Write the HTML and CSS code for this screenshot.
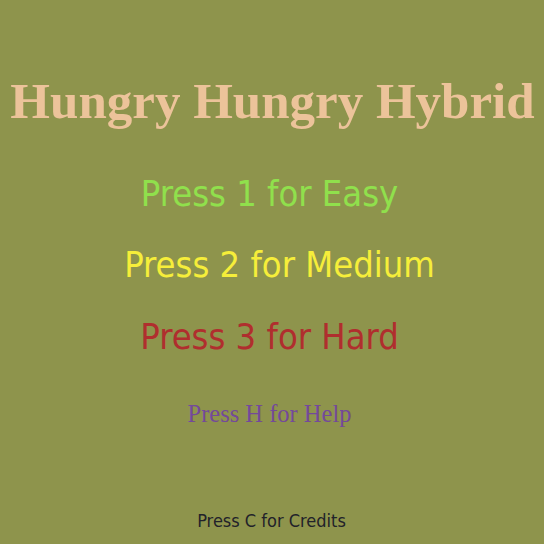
FILE: index.html
```html
<!DOCTYPE html>
<html>
<head>
<meta charset="utf-8">
<link rel="stylesheet" href="styles.css">
</head>
<body>
<main class="screen">
  <h1 class="title">Hungry Hungry Hybrid</h1>
  <p class="opt easy">Press 1 for Easy</p>
  <p class="opt medium">Press 2 for Medium</p>
  <p class="opt hard">Press 3 for Hard</p>
  <p class="help">Press H for Help</p>
  <p class="credits">Press C for Credits</p>
</main>
</body>
</html>
```
FILE: styles.css
```css
html, body {
  margin: 0;
  padding: 0;
}
body {
  width: 544px;
  height: 544px;
  background: #8e944c;
  overflow: hidden;
}
.screen {
  display: flex;
  flex-direction: column;
  align-items: center;
  height: 544px;
  padding-right: 5px;
}
.title {
  margin: 73px 0 0 0;
  padding-left: 6px;
  font-family: "Liberation Serif", serif;
  font-weight: bold;
  font-size: 51px;
  line-height: 56px;
  color: #ecc39a;
  white-space: nowrap;
}
.opt {
  margin: 0;
  font-family: "DejaVu Sans", sans-serif;
  font-stretch: semi-condensed;
  font-size: 36px;
  line-height: 40px;
  white-space: nowrap;
}
.easy {
  margin-top: 45px;
  color: #90e04c;
}
.medium {
  margin-top: 31px;
  color: #f6ee3a;
  padding-left: 20px;
}
.hard {
  margin-top: 32px;
  color: #b02e2e;
}
.help {
  margin: 43px 0 0 0;
  font-family: "Liberation Serif", serif;
  font-size: 24.5px;
  line-height: 28px;
  color: #74499a;
  white-space: nowrap;
}
.credits {
  margin: 82px 0 0 0;
  padding-left: 4px;
  font-family: "DejaVu Sans", sans-serif;
  font-stretch: semi-condensed;
  font-size: 18px;
  line-height: 22px;
  color: #22222a;
  white-space: nowrap;
}
```
